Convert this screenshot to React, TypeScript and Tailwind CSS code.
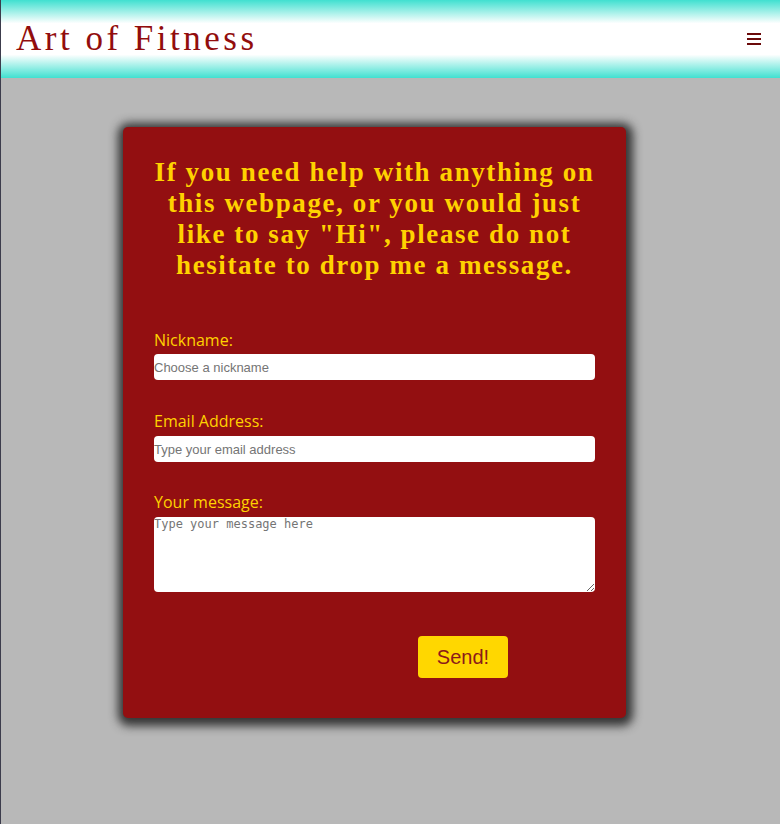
export default function App() {
  return (
    <div className="min-h-[824px] bg-[#b8b8b8] border-l border-[#3c3c4c]">
      <header className="h-[78px] flex items-center justify-between pl-[15px] pr-[19px] bg-[linear-gradient(to_bottom,#40e0d0_0%,#ffffff_30%,#ffffff_70%,#40e0d0_100%)]">
        <h1 className="text-[35px] text-[#920d0d] tracking-[3.5px] font-['Liberation_Serif',serif]">
          Art of Fitness
        </h1>
        <button className="flex flex-col gap-[3px] w-[14px]">
          <span className="h-[2px] bg-[#6b0a0a]" />
          <span className="h-[2px] bg-[#6b0a0a]" />
          <span className="h-[2px] bg-[#6b0a0a]" />
        </button>
      </header>

      <main className="pt-[49px] pl-[122px]">
        <div className="w-[503px] bg-[#930f11] rounded-[5px] shadow-[1px_2px_10px_6px_rgba(30,30,30,0.85)] px-[31px] pt-[30px] pb-[40px]">
          <h2 className="text-center text-[#ffd200] text-[27px] leading-[31px] font-bold tracking-[1.6px] font-['Liberation_Serif',serif] whitespace-nowrap">
            If you need help with anything on
            <br />
            this webpage, or you would just
            <br />
            like to say "Hi", please do not
            <br />
            hesitate to drop me a message.
          </h2>

          <form className="mt-[48px] font-['Open_Sans',sans-serif]">
            <label className="block text-[#ffd200] text-[16px] leading-[22px]">Nickname:</label>
            <input
              type="text"
              placeholder="Choose a nickname"
              className="block mt-[3px] w-full h-[26px] bg-white rounded-[4px] text-[13px] font-['Liberation_Sans',sans-serif] placeholder:text-[#757575] outline-none"
            />

            <label className="block mt-[30px] text-[#ffd200] text-[16px] leading-[22px]">Email Address:</label>
            <input
              type="email"
              placeholder="Type your email address"
              className="block mt-[4px] w-full h-[26px] bg-white rounded-[4px] text-[13px] font-['Liberation_Sans',sans-serif] placeholder:text-[#757575] outline-none"
            />

            <label className="block mt-[29px] text-[#ffd200] text-[16px] leading-[22px]">Your message:</label>
            <textarea
              placeholder="Type your message here"
              className="block mt-[4px] w-full h-[75px] bg-white rounded-[4px] text-[12px] leading-[15px] pt-0 font-['DejaVu_Sans_Mono',monospace] placeholder:text-[#757575] outline-none"
            />

            <div className="mt-[44px] flex justify-end pr-[87px]">
              <button
                type="submit"
                className="w-[90px] h-[42px] bg-[#ffd700] rounded-[4px] text-[#8b1a1a] text-[20px] font-['Liberation_Sans',sans-serif]"
              >
                Send!
              </button>
            </div>
          </form>
        </div>
      </main>
    </div>
  );
}
